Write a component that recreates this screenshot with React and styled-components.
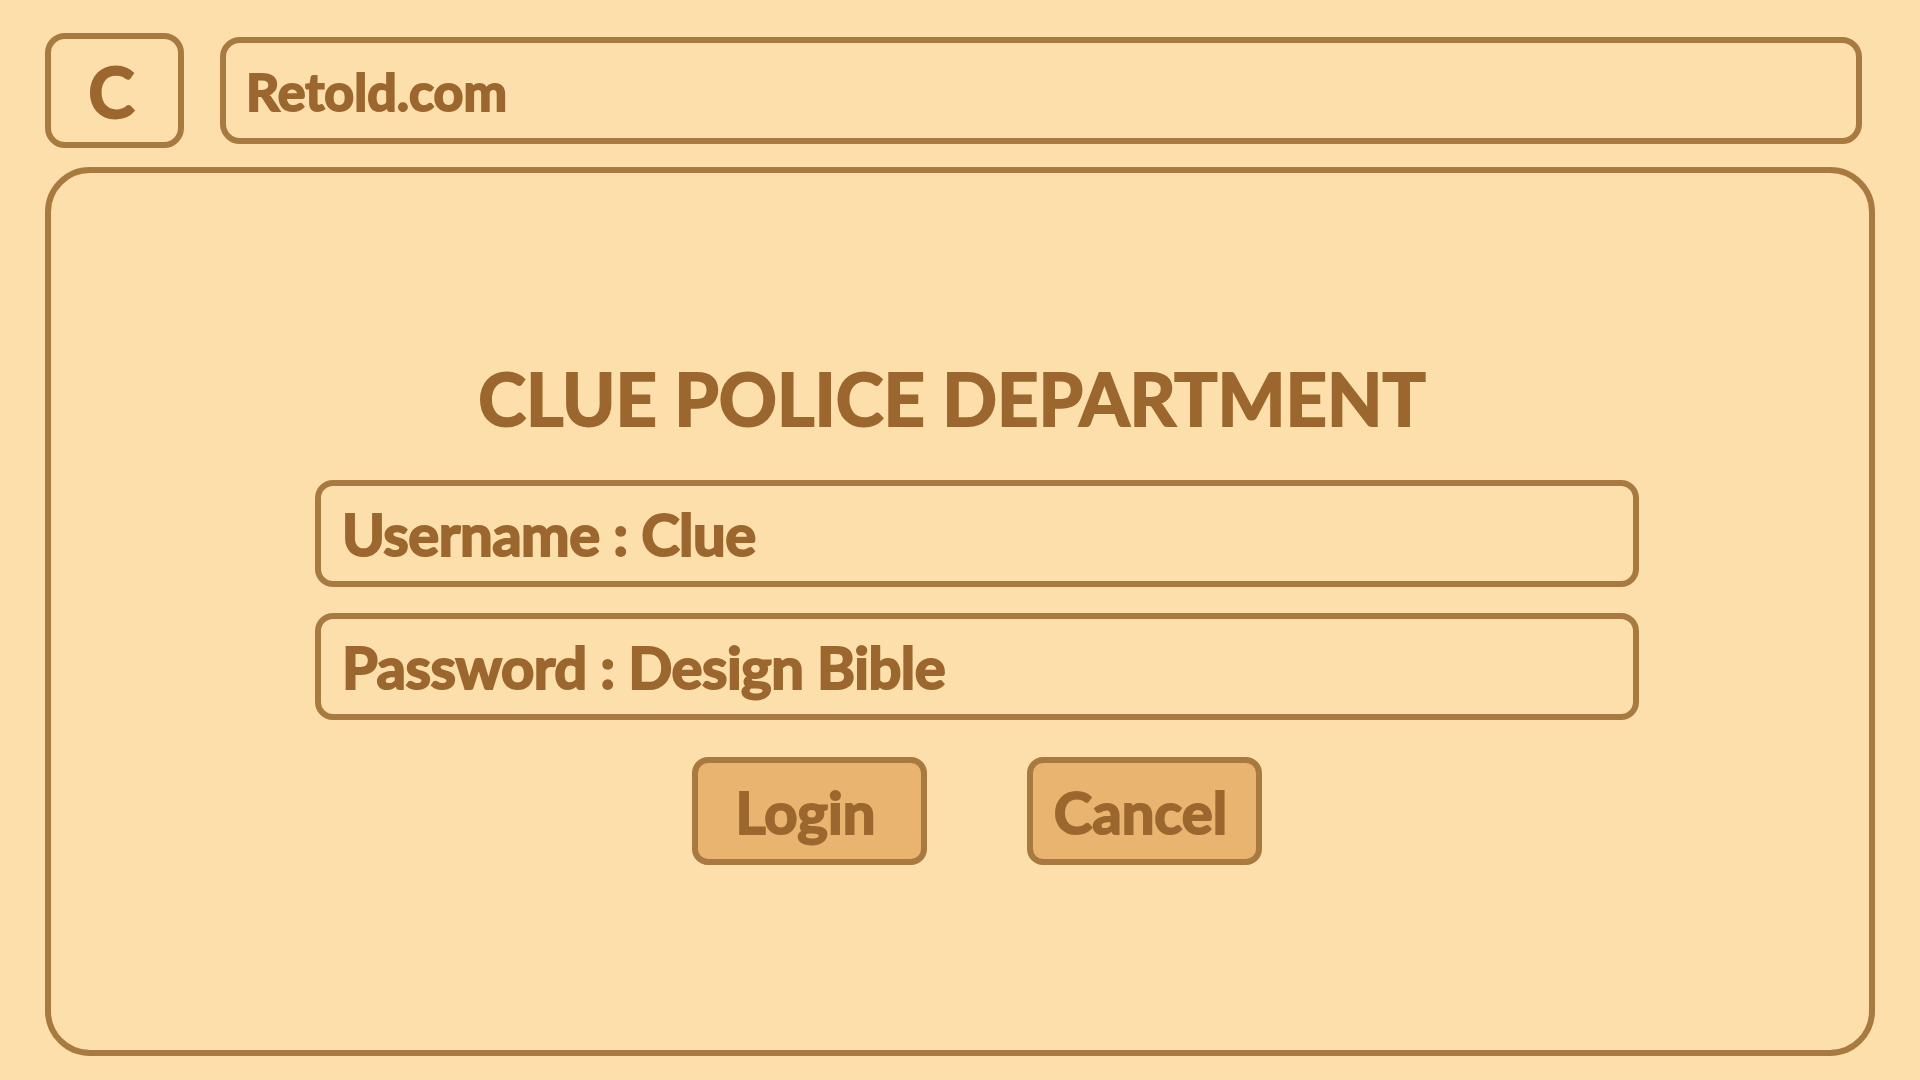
import React from 'react'
import styled, { createGlobalStyle } from 'styled-components'

const GlobalStyle = createGlobalStyle`
  html, body {
    margin: 0;
    padding: 0;
    background: #fddfab;
  }
  body {
    font-family: "Lato", "Noto Sans", sans-serif;
    color: #9c672e;
    -webkit-text-stroke: 2px #9c672e;
  }
`

export default function App() {
  return (
    <>
      <GlobalStyle />
      <Page>
        <TopBar>
          <LogoBox>C</LogoBox>
          <AddressBar>Retold.com</AddressBar>
        </TopBar>
        <Window>
          <Title>CLUE POLICE DEPARTMENT</Title>
          <Form>
            <Field>Username : Clue</Field>
            <Field>Password : Design Bible</Field>
            <Buttons>
              <Button>Login</Button>
              <Button>Cancel</Button>
            </Buttons>
          </Form>
        </Window>
      </Page>
    </>
  )
}

const Page = styled.div`
  width: 1920px;
  height: 1080px;
  box-sizing: border-box;
  padding: 33px 0 0 45px;
  overflow: hidden;
`
const TopBar = styled.div`
  display: flex;
  align-items: center;
  gap: 36px;
`
const LogoBox = styled.div`
  width: 139px;
  height: 115px;
  box-sizing: border-box;
  border: 6px solid #a97a40;
  border-radius: 20px;
  display: flex;
  align-items: center;
  justify-content: center;
  padding-right: 6px;
  font-size: 70px;
  font-weight: 700;
  line-height: 1;
`
const AddressBar = styled.div`
  width: 1642px;
  height: 107px;
  box-sizing: border-box;
  border: 6px solid #a97a40;
  border-radius: 20px;
  display: flex;
  align-items: center;
  padding-left: 20px;
  font-size: 52px;
  font-weight: 700;
`
const Window = styled.div`
  margin-top: 19px;
  width: 1830px;
  height: 889px;
  box-sizing: border-box;
  border: 6px solid #a97a40;
  border-radius: 45px;
  padding-top: 189px;
  display: flex;
  flex-direction: column;
  align-items: center;
`
const Title = styled.h1`
  margin: 0 16px 46px 0;
  font-size: 72px;
  line-height: 1;
  font-weight: 700;
`
const Form = styled.div`
  align-self: stretch;
  padding: 0 230px 0 264px;
  display: flex;
  flex-direction: column;
  gap: 26px;
`
const Field = styled.div`
  height: 107px;
  box-sizing: border-box;
  border: 6px solid #a97a40;
  border-radius: 18px;
  display: flex;
  align-items: center;
  padding-left: 21px;
  font-size: 58px;
  font-weight: 700;
  letter-spacing: -0.5px;
`
const Buttons = styled.div`
  margin-top: 11px;
  display: flex;
  justify-content: center;
  gap: 100px;
`
const Button = styled.button`
  width: 235px;
  height: 108px;
  box-sizing: border-box;
  border: 6px solid #a97a40;
  border-radius: 16px;
  background: #e8b46f;
  color: #9c672e;
  -webkit-text-stroke: 2px #9c672e;
  font-family: "Lato", "Noto Sans", sans-serif;
  font-size: 58px;
  font-weight: 700;
  padding: 0 8px 0 0;
`
